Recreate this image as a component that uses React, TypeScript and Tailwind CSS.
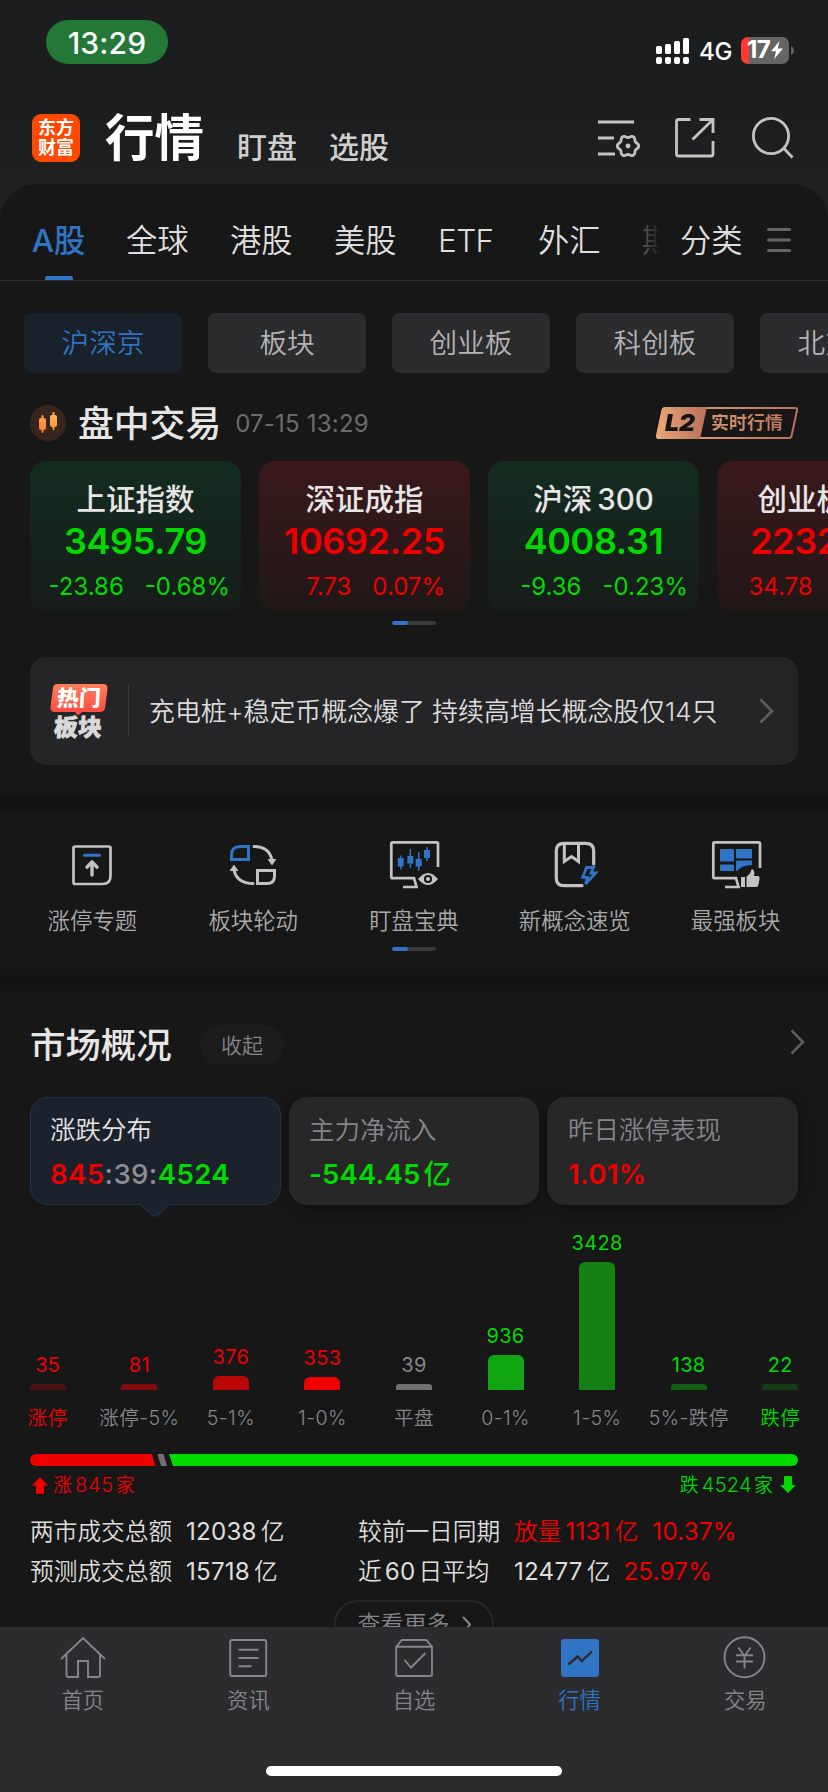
import React from 'react';

const up = 'text-[#ee0000]';
const down = 'text-[#00da00]';

function Chevron({ className }: { className?: string }) {
  return (
    <svg width="15" height="26" viewBox="0 0 15 26" fill="none" stroke="#5f5f61" strokeWidth="2.6" className={className}>
      <path d="M1.5 1.5L13 13L1.5 24.5" />
    </svg>
  );
}

function Pager() {
  return (
    <div className="mx-auto h-1 w-11 overflow-hidden rounded-full bg-[#3a3a3c]">
      <div className="h-1 w-4 rounded-full bg-[#2f74c5]" />
    </div>
  );
}

function StatusBar() {
  const bars = [8, 10, 13, 16];
  return (
    <div className="flex h-[88px] shrink-0 items-start justify-between pr-[34px] pl-[46px]">
      <div className="mt-5 flex h-11 w-[122px] items-center justify-center rounded-full bg-[#237737] pt-px text-[30px] font-medium tracking-[0.2px] text-white">
        13:29
      </div>
      <div className="mt-9 flex h-7 items-center">
        <svg width="33" height="27" viewBox="0 0 33 27" fill="#fff">
          {bars.map((h, i) => (
            <g key={h}>
              <rect x={i * 9} y={17 - h} width="6" height={h} rx="1.6" />
              <rect x={i * 9} y="20" width="6" height="7" rx="2" />
            </g>
          ))}
        </svg>
        <span className="mt-[3px] ml-[10px] w-8 text-[24px] font-medium tracking-[-0.2px] text-white">4G</span>
        <div className="ml-[10px] flex h-[27px] w-12 items-center overflow-hidden rounded-[7px] bg-[linear-gradient(90deg,#ff3b30_0_8px,#656565_8px)] pl-[6px] text-white">
          <span className="text-[24px] font-bold tracking-[-0.6px]">17</span>
          <svg width="12" height="18" viewBox="0 0 12 18" fill="#fff" className="ml-px">
            <path d="M8.5 0L0 10.2H5L3.2 18L12 7.4H6.8Z" />
          </svg>
        </div>
        <svg width="3" height="9" viewBox="0 0 3 9" fill="#656565" className="ml-[2px]">
          <path d="M0 0C4 2 4 7 0 9Z" />
        </svg>
      </div>
    </div>
  );
}

const gearPath =
  Array.from({ length: 73 }, (_, i) => {
    const a = (i / 72) * Math.PI * 2;
    const r = 9.6 + 1.1 * Math.cos(6 * a);
    return `${i ? 'L' : 'M'}${(30 + r * Math.cos(a)).toFixed(2)} ${(29 + r * Math.sin(a)).toFixed(2)}`;
  }).join('') + 'Z';

function Header() {
  return (
    <div className="flex h-24 shrink-0 items-start pl-8">
      <div className="mt-[26px] flex h-12 w-12 flex-col items-center justify-center rounded-[9px] bg-[#ff4800] text-[18px] leading-[20px] font-bold text-white">
        <span>东方</span>
        <span>财富</span>
      </div>
      <div className="mt-[26px] ml-[25px] w-[98px] text-[49.5px] leading-[48px] font-bold whitespace-nowrap text-white">行情</div>
      <div className="mt-11 ml-[34px] text-[30px] leading-[30px] font-medium text-[#cfcfcf]">盯盘</div>
      <div className="mt-11 ml-8 text-[30px] leading-[30px] font-medium text-[#cfcfcf]">选股</div>
      <div className="mt-[29px] ml-[209px] flex text-[#c4c4c4]">
        <svg width="43" height="42" viewBox="0 0 43 42" fill="none" stroke="currentColor" strokeWidth="3">
          <path d="M0 5H36M0 21H16M0 37H17" />
          <path d={gearPath} strokeWidth="2.8" />
          <circle cx="30" cy="29" r="2.4" fill="currentColor" stroke="none" />
        </svg>
        <svg width="41" height="42" viewBox="0 0 41 42" fill="none" stroke="currentColor" strokeWidth="2.8" className="ml-[33px]">
          <path d="M16.5 2.5H4.5Q2.5 2.5 2.5 4.5V37Q2.5 39 4.5 39H37Q39 39 39 37V24M25.5 2.5H39V16M39 2.5L18.500 22.500" />
        </svg>
        <svg width="43" height="42" viewBox="0 0 43 42" fill="none" stroke="currentColor" strokeWidth="2.8" className="ml-[37px]">
          <circle cx="19" cy="19" r="17.6" />
          <path d="M31.5 31L40.5 40.5" />
        </svg>
      </div>
    </div>
  );
}

function Tabs() {
  return (
    <div className="flex h-[97px] border-b border-[#2d2d2d] pl-8 text-[31.3px] text-[#dedede]">
      <div className="flex h-full w-[53px] flex-col items-center">
        <span className="mt-[34px] leading-[46px] font-medium whitespace-nowrap text-[#2f74c5]">A股</span>
        <span className="mt-auto h-1 w-7 rounded-t-[2px] bg-[#2f74c5]" />
      </div>
      <div className="mt-[34px] flex leading-[46px] whitespace-nowrap">
        <span className="ml-[41px] w-[63px]">全球</span>
        <span className="ml-[41px] w-[63px]">港股</span>
        <span className="ml-[41px] w-[63px]">美股</span>
        <span className="ml-[41px] w-[59px] text-[31.5px] tracking-[-0.6px]">ETF</span>
        <span className="ml-[41px] w-[63px]">外汇</span>
        <span className="ml-[42px] w-[17px] overflow-hidden bg-[linear-gradient(90deg,#5a5a5a,#1c1c1c)] bg-clip-text text-transparent">
          <span className="-ml-px block w-8">期</span>
        </span>
        <span className="ml-[20px] w-[63px]">分类</span>
        <svg width="24" height="24" viewBox="0 0 24 24" stroke="#666" strokeWidth="3" strokeLinecap="round" className="mt-[10px] ml-[24px]">
          <path d="M1.5 1.5H22.5M1.5 12H22.5M1.5 22.5H22.5" />
        </svg>
      </div>
    </div>
  );
}

function Chips() {
  return (
    <div className="mt-8 flex h-[60px] gap-[26px] overflow-hidden pl-6 text-[27.6px]">
      <div className="flex w-[158px] shrink-0 items-center justify-center rounded-lg bg-[#19212a] pt-0.5 text-[#2f74c5]">沪深京</div>
      {['板块', '创业板', '科创板', '北交所'].map((t) => (
        <div key={t} className="flex w-[158px] shrink-0 items-center justify-center rounded-lg bg-[#2c2c2e] pt-0.5 text-[#b3b3b5]">
          {t}
        </div>
      ))}
    </div>
  );
}

function SessionTitle() {
  return (
    <div className="mt-8 mb-5 flex h-9 items-center pl-[30px]">
      <svg width="36" height="36" viewBox="0 0 36 36">
        <defs>
          <linearGradient id="c1" x1="0" y1="0" x2="0" y2="1">
            <stop offset="0" stopColor="#ffa04e" />
            <stop offset="1" stopColor="#fd7a3c" />
          </linearGradient>
          <linearGradient id="c2" x1="0" y1="0" x2="0" y2="1">
            <stop offset="0" stopColor="#ffb85c" />
            <stop offset="1" stopColor="#fd9542" />
          </linearGradient>
        </defs>
        <circle cx="18" cy="18" r="18" fill="#38251b" />
        <g fill="url(#c1)">
          <rect x="9" y="13" width="7" height="12" rx="2" />
          <rect x="11.5" y="10" width="2" height="18" rx="1" />
        </g>
        <g fill="url(#c2)">
          <rect x="20" y="10" width="7" height="12" rx="2" />
          <rect x="22.5" y="7" width="2" height="18" rx="1" />
        </g>
      </svg>
      <span className="mt-[3px] ml-[12px] text-[35.800px] font-medium text-[#e6e6e6]">盘中交易</span>
      <span className="mt-[2px] ml-[14px] text-[24px] font-normal tracking-[0.200px] text-[#6b6b6d]">07-15 13:29</span>
      <div className="relative mr-[30px] ml-auto flex h-8 w-[142px] items-center">
        <svg width="142" height="32" viewBox="0 0 142 32" className="absolute inset-0">
          <defs>
            <linearGradient id="l2" x1="0" y1="0" x2="1" y2="0">
              <stop offset="0" stopColor="#e9a778" />
              <stop offset="1" stopColor="#b9705a" />
            </linearGradient>
          </defs>
          <path d="M9.500 1H139Q141.500 1 141 3.500L135.500 29Q135 31 133 31H3Q0.500 31 1 28.500L6.500 3Q7 1 9.500 1Z" fill="none" stroke="url(#l2)" strokeWidth="2" />
          <path d="M9.500 0H51L44 32H3Q0 32 0.500 29L6 3Q6.500 0 9.500 0Z" fill="url(#l2)" />
        </svg>
        <span className="relative ml-[9px] inline-block w-[36px] origin-left scale-x-[1.08] text-[23px] font-black italic text-[#141414]">L2</span>
        <span className="relative ml-[10px] bg-[linear-gradient(90deg,#d8966f,#bd755d)] bg-clip-text text-[18px] font-bold whitespace-nowrap text-transparent">
          实时行情
        </span>
      </div>
    </div>
  );
}

type Index = { name: React.ReactNode; value: string; diff: string; pct: string; rise: boolean; pad: string };
const indices: Index[] = [
  { name: '上证指数', value: '3495.79', diff: '-23.86', pct: '-0.68%', rise: false, pad: 'pr-[11px]' },
  { name: '深证成指', value: '10692.25', diff: '7.73', pct: '0.07%', rise: true, pad: 'pr-[25px]' },
  { name: <>沪深<span className="ml-[5px]">300</span></>, value: '4008.31', diff: '-9.36', pct: '-0.23%', rise: false, pad: 'pr-[11px]' },
  { name: <span className="mr-[12px]">创业板指</span>, value: '2232.60', diff: '34.78', pct: '1.58%', rise: true, pad: 'pr-[25px]' },
];

function IndexCards() {
  return (
    <div className="flex h-[151px] gap-[18px] overflow-hidden pl-[30px]">
      {indices.map((x) => (
        <div
          key={x.value}
          className={`flex w-[211px] shrink-0 flex-col items-center rounded-2xl pt-[18px] ${
            x.rise ? 'bg-[linear-gradient(180deg,#3b191b,#201717)]' : 'bg-[linear-gradient(180deg,#142c20,#171c1a)]'
          }`}
        >
          <span className="text-[29.500px] leading-[40px] font-medium text-[#e6e6e6]">{x.name}</span>
          <span className={`mt-[1px] text-[36px] leading-[42px] font-semibold tracking-[-0.400px] ${x.rise ? up : down}`}>{x.value}</span>
          <div className={`mt-[10px] flex w-full justify-end gap-[21px] text-[24px] leading-[29px] font-normal ${x.pad} ${x.rise ? up : down}`}>
            <span>{x.diff}</span>
            <span>{x.pct}</span>
          </div>
        </div>
      ))}
    </div>
  );
}

function HotBanner() {
  return (
    <div className="mx-[30px] mt-8 mb-[30px] flex h-[108px] items-center rounded-2xl bg-[#252527]">
      <div className="relative ml-5 h-[54px] w-[58px]">
        <svg width="58" height="32" viewBox="0 0 58 32" className="absolute top-0 left-0">
          <defs>
            <linearGradient id="hot" x1="0" y1="0" x2="0" y2="1">
              <stop offset="0" stopColor="#ff7f5c" />
              <stop offset="1" stopColor="#fb4840" />
            </linearGradient>
          </defs>
          <path d="M7 0H53Q58 0 57.500 5L55 24Q54.500 28 50 28H32L28 31.500L25 28H5Q0 28 0.500 23L3 4Q3.500 0 7 0Z" fill="url(#hot)" />
        </svg>
        <div className="relative -skew-x-3 text-center text-[22px] leading-[29px] font-black text-white">热门</div>
        <div className="relative -ml-[2px] -skew-x-3 text-center text-[24px] leading-[29px] font-black text-[#d9d9d9] [-webkit-text-stroke:0.600px_#d9d9d9]">板块</div>
      </div>
      <div className="ml-5 h-[52px] w-px bg-[#3c3c3e]" />
      <span className="mt-0.5 ml-[20px] text-[25.900px] whitespace-pre text-[#dcdcde]">充电桩+稳定币概念爆了 持续高增长概念股仅14只</span>
      <Chevron className="mr-[24px] ml-auto" />
    </div>
  );
}

const tools = [
  {
    label: '涨停专题',
    icon: (
      <>
        <path d="M11 10.500H45Q46.500 10.500 46.500 12V40Q46.500 48 38.500 48H11Q9.500 48 9.500 46.500V12Q9.500 10.500 11 10.500Z" stroke="#c3c3c3" />
        <path d="M20.500 19.300H35.500" stroke="#2f74c5" strokeWidth="3" strokeLinecap="round" />
        <path d="M28 39V26M23 31.200L28 25.800L33 31.200" stroke="#c3c3c3" strokeWidth="3.400" strokeLinecap="round" strokeLinejoin="round" />
      </>
    ),
  },
  {
    label: '板块轮动',
    icon: (
      <>
        <path d="M15 10.500H23.500V23.500H6.500V19Q6.500 10.500 15 10.500Z" stroke="#2f74c5" strokeWidth="3" />
        <path d="M32.500 34.500H49.500V40Q49.500 47.500 42 47.500H32.500Z" stroke="#c3c3c3" strokeWidth="3" />
        <path d="M29 10.500Q44 10.500 47 24M28 47.500Q12 47.500 9 34" stroke="#c3c3c3" strokeWidth="3" strokeLinecap="round" />
        <path d="M43.500 23.500H50.500L47 28.500ZM5.500 34.500H12.500L9 29.500Z" fill="#c3c3c3" stroke="#c3c3c3" strokeWidth="1.200" strokeLinejoin="round" />
      </>
    ),
  },
  {
    label: '盯盘宝典',
    icon: (
      <>
        <path d="M52 31V7.500Q52 6.300 50.500 6.300H6.800Q5.300 6.300 5.300 7.800V40.700Q5.300 42.200 6.800 42.200H28L30.500 51H17" stroke="#c3c3c3" />
        <g fill="#2f74c5">
          <rect x="11.700" y="22" width="6" height="8.500" />
          <rect x="14" y="19.500" width="1.500" height="14" />
          <rect x="21.300" y="20" width="6" height="7.500" />
          <rect x="23.600" y="13" width="1.500" height="19" />
          <rect x="29.700" y="23" width="6" height="7.500" />
          <rect x="32" y="16" width="1.500" height="19" />
          <rect x="38" y="14" width="6" height="8" />
          <rect x="40.300" y="11" width="1.500" height="14" />
        </g>
        <path d="M29.500 43Q42 28 54.500 43Q42 58 29.500 43Z" fill="#171717" />
        <path d="M32 43Q42 31 52 43Q42 55 32 43Z" fill="#c3c3c3" />
        <circle cx="42" cy="43" r="3.100" stroke="#171717" strokeWidth="2" />
      </>
    ),
  },
  {
    label: '新概念速览',
    icon: (
      <>
        <path d="M46.700 28V15Q46.700 7.300 39 7.300H17Q9.300 7.300 9.300 15V42Q9.300 49.700 17 49.700H35" stroke="#c3c3c3" strokeWidth="3.200" strokeLinecap="round" />
        <path d="M17.300 7V25.500L24.500 20.500L31.500 25.500V7" stroke="#c3c3c3" strokeWidth="3" />
        <path d="M39.500 31.500H46.500L44 37H48.800L38.500 48L40.500 41.300H35.700Z" stroke="#2f74c5" strokeWidth="2.800" />
      </>
    ),
  },
  {
    label: '最强板块',
    icon: (
      <>
        <path d="M52 32V7.500Q52 6.300 50.500 6.300H6.800Q5.300 6.300 5.300 7.800V40.700Q5.300 42.200 6.800 42.200H28L30.500 51H17" stroke="#c3c3c3" />
        <g fill="#2f74c5">
          <rect x="12" y="13" width="14" height="12.500" rx="1" />
          <rect x="28" y="13" width="16" height="9.500" rx="1" />
          <rect x="12" y="28.500" width="14" height="6.500" rx="1" />
          <path d="M29 24.500H44V29Q34 29 29 35H28V25.500Q28 24.500 29 24.500Z" />
        </g>
        <circle cx="43" cy="42.500" r="12.500" fill="#171717" />
        <path d="M33 41H37V51H33ZM38.500 40.500Q43 37.500 43 34.500Q44 32.500 45.500 34Q47 36 45.800 40H49.500Q52 40 51.500 43L50.500 48.500Q50 51 48 51H38.500Z" fill="#c3c3c3" />
      </>
    ),
  },
];

function Tools() {
  return (
    <div className="h-[164px] px-[12px] pt-[25px]">
      <div className="grid grid-cols-5">
        {tools.map((t) => (
          <div key={t.label} className="flex flex-col items-center">
            <svg width="56" height="56" viewBox="0 0 56 56" fill="none" strokeWidth="2.700">
              {t.icon}
            </svg>
            <span className="mt-[12px] text-[22.400px] leading-[33px] text-[#a9a9ab]">{t.label}</span>
          </div>
        ))}
      </div>
      <div className="mt-[10px]">
        <Pager />
      </div>
    </div>
  );
}

function OverviewCards() {
  return (
    <div className="mx-[30px] mt-8 grid h-[108px] grid-cols-[251px_250px_251px] gap-2">
      <div className="relative flex flex-col rounded-[18px] border border-[#20364f] bg-[#1b222b] pt-[16px] pl-[19px]">
        <span className="text-[25.500px] leading-[32px] text-[#e3e3e3]">涨跌分布</span>
        <span className="mt-[12px] text-[27.600px] leading-[32px] font-semibold tracking-[0.400px]">
          <span className={up}>845</span>
          <span className="font-medium text-[#8e8e96]">:39:</span>
          <span className={down}>4524</span>
        </span>
        <svg width="30" height="14" viewBox="0 0 30 14" className="absolute top-[106px] left-[109px]">
          <path d="M0 0.500L12.500 11.500Q15 13 17.500 11.500L30 0.500V0H0Z" fill="#1b222b" />
          <path d="M0 0.500L12.500 11.500Q15 13 17.500 11.500L30 0.500" fill="none" stroke="#20364f" />
        </svg>
      </div>
      <div className="flex flex-col rounded-[18px] bg-[#272727] pt-[17px] pl-5 shadow-[0_2px_12px_rgba(0,0,0,0.35)]">
        <span className="text-[25.500px] leading-[32px] text-[#85858b]">主力净流入</span>
        <span className={`mt-[12px] text-[27.500px] leading-[32px] font-semibold tracking-[0.200px] ${down}`}>
          -544.45<span className="ml-[3px] font-medium">亿</span>
        </span>
      </div>
      <div className="flex flex-col rounded-[18px] bg-[#272727] pt-[17px] pl-[21px] shadow-[0_2px_12px_rgba(0,0,0,0.35)]">
        <span className="text-[25.500px] leading-[32px] text-[#85858b]">昨日涨停表现</span>
        <span className={`mt-[12px] text-[27.500px] leading-[32px] font-semibold tracking-[0.300px] ${up}`}>1.01%</span>
      </div>
    </div>
  );
}

const bars = [
  { n: 35, h: 6, label: '涨停', bar: 'bg-[#4b1212]', num: up, cat: up },
  { n: 81, h: 6, label: '涨停-5%', bar: 'bg-[#820b0b]', num: up, cat: 'text-[#85858b]' },
  { n: 376, h: 14, label: '5-1%', bar: 'bg-[#b90606]', num: up, cat: 'text-[#85858b]' },
  { n: 353, h: 13, label: '1-0%', bar: 'bg-[#ee0000]', num: up, cat: 'text-[#85858b]' },
  { n: 39, h: 6, label: '平盘', bar: 'bg-[#717171]', num: 'text-[#85858b]', cat: 'text-[#85858b]' },
  { n: 936, h: 35, label: '0-1%', bar: 'bg-[#12a512]', num: down, cat: 'text-[#85858b]' },
  { n: 3428, h: 128, label: '1-5%', bar: 'bg-[#158115]', num: down, cat: 'text-[#85858b]' },
  { n: 138, h: 6, label: '5%-跌停', bar: 'bg-[#155c15]', num: down, cat: 'text-[#85858b]' },
  { n: 22, h: 6, label: '跌停', bar: 'bg-[#163a16]', num: down, cat: down },
];

function Distribution() {
  return (
    <>
      <div className="grid grid-cols-9 px-[2px]">
        {bars.map((b) => (
          <div key={b.n} className="flex flex-col items-center">
            <div className="flex h-[185px] flex-col items-center justify-end">
              <span className={`mb-[7px] text-[20px] leading-[24px] font-normal tracking-[0.300px] ${b.num}`}>{b.n}</span>
              <div className={`w-9 ${b.h > 6 ? 'rounded-t-[6px]' : 'rounded-t-[3px]'} ${b.bar}`} style={{ height: b.h }} />
            </div>
            <span className={`flex h-14 items-center pt-[2px] text-[19.600px] tracking-[0.400px] whitespace-nowrap ${b.cat}`}>{b.label}</span>
          </div>
        ))}
      </div>
      <svg width="768" height="12" viewBox="0 0 768 12" className="mx-[30px] mt-2">
        <path d="M6 0H122L125.500 12H6A6 6 0 0 1 6 0Z" fill="#ee0000" />
        <path d="M127.500 0H133.500L137 12H131Z" fill="#717171" />
        <path d="M139 0H762A6 6 0 0 1 762 12H143Z" fill="#00da00" />
      </svg>
      <div className="mx-[32px] flex h-9 items-center text-[19px]">
        <svg width="16" height="17" viewBox="0 0 16 17" className="mt-[2px]">
          <path d="M8 0L16 8.500H12V16Q12 17 11 17H5Q4 17 4 16V8.500H0Z" fill="#ee0000" />
        </svg>
        <span className={`mt-[2px] ml-[5px] ${up}`}>
          涨<span className="mr-[2px] ml-[3px] text-[20px] tracking-[0.700px]">845</span>家
        </span>
        <span className={`mt-[2px] ml-auto ${down}`}>
          跌<span className="mr-[2px] ml-[3px] text-[20px] tracking-[0.300px]">4524</span>家
        </span>
        <svg width="16" height="17" viewBox="0 0 16 17" className="ml-[7px]">
          <path d="M8 17L0 9H4V1Q4 0 5 0H11Q12 0 12 1V9H16Z" fill="#00da00" />
        </svg>
      </div>
    </>
  );
}

function Num({ children, className = '' }: { children: React.ReactNode; className?: string }) {
  return <span className={`text-[24.200px] font-normal tracking-[0.200px] ${className}`}>{children}</span>;
}

function Turnover() {
  const row = 'flex h-10 items-center whitespace-nowrap';
  return (
    <div className="mt-[10px] grid grid-cols-[328px_1fr] pl-[30px] text-[23.700px] text-[#dedede]">
      <div className={row}>
        <span className="w-[156px]">两市成交总额</span>
        <span><Num className="mr-1">12038</Num>亿</span>
      </div>
      <div className={row}>
        <span className="w-[156px]">较前一日同期</span>
        <span className={up}>放量<Num className="mx-1">1131</Num>亿</span>
        <Num className={`ml-[14px] ${up}`}>10.37%</Num>
      </div>
      <div className={row}>
        <span className="w-[156px]">预测成交总额</span>
        <span><Num className="mr-1">15718</Num>亿</span>
      </div>
      <div className={row}>
        <span className="w-[156px]">近<Num className="mx-[3px]">60</Num>日平均</span>
        <span><Num className="mr-1">12477</Num>亿</span>
        <Num className={`ml-[13px] ${up}`}>25.97%</Num>
      </div>
    </div>
  );
}

const nav = [
  { label: '首页', icon: <path d="M6 32L28 11L50 32M11.500 27.500V48Q11.500 50 13.500 50H23V34H33V50H43Q45 50 45 48V27.500" /> },
  {
    label: '资讯',
    icon: (
      <>
        <rect x="10.200" y="13" width="36" height="36" rx="2" />
        <path d="M18.500 22.700H38.500M18.500 31H38.500M18.500 39.300H31.500" />
      </>
    ),
  },
  {
    label: '自选',
    icon: (
      <path d="M10.200 19.800H46V47Q46 49 44 49H12.200Q10.200 49 10.200 47V19.800L15 13.800Q15.700 13 16.500 13H39.700Q40.500 13 41.200 13.800L46 19.800M18.500 33L25 40.500L39.500 26" />
    ),
  },
  {
    label: '行情',
    active: true,
    icon: (
      <>
        <rect x="9.500" y="12.500" width="37" height="37" rx="2" fill="#2f74c5" stroke="#2f74c5" strokeWidth="1" />
        <path d="M16.500 37.500L25.500 29.500L29.800 34L39.800 24.500" stroke="#2c2c2e" strokeWidth="2.400" />
      </>
    ),
  },
  {
    label: '交易',
    icon: (
      <>
        <circle cx="27.500" cy="30.300" r="20" />
        <path d="M21.300 20.500L27.500 29L33.700 20.500M27.500 28V41.500M19 28.300H36M19 34.500H36" />
      </>
    ),
  },
];

function BottomNav() {
  return (
    <div className="flex h-[165px] shrink-0 flex-col bg-[#2c2c2e]">
      <div className="grid grid-cols-5">
        {nav.map((n) => (
          <div key={n.label} className="flex flex-col items-center">
            <svg width="56" height="56" viewBox="0 0 56 56" fill="none" stroke="#85858b" strokeWidth="1.900">
              {n.icon}
            </svg>
            <span className={`mt-[2px] text-[21.300px] leading-[31px] ${n.active ? 'text-[#2f74c5]' : 'text-[#85858b]'}`}>{n.label}</span>
          </div>
        ))}
      </div>
      <div className="mx-auto mt-auto mb-4 h-[10px] w-[296px] rounded-full bg-white" />
    </div>
  );
}

export default function App() {
  return (
    <div className="flex h-[1792px] w-[828px] flex-col overflow-hidden bg-[linear-gradient(180deg,#1c1d1f_0px,#1c1d1f_110px,#212121_200px)] font-['Inter','Noto_Sans_CJK_SC',sans-serif] leading-none font-[350]">
      <StatusBar />
      <Header />
      <div className="min-h-0 flex-1 overflow-hidden rounded-t-[36px] bg-[#171717]">
        <Tabs />
        <Chips />
        <SessionTitle />
        <IndexCards />
        <div className="mt-[9px]">
          <Pager />
        </div>
        <HotBanner />
        <div className="h-4 bg-[#121212]" />
        <Tools />
        <div className="h-4 bg-[#121212]" />
        <div className="mt-[34px] flex h-10 items-center pl-[30px]">
          <span className="mt-[2px] w-[142px] text-[35.400px] font-medium text-[#e6e6e6]">市场概况</span>
          <span className="ml-[28px] flex h-10 w-[84px] items-center justify-center rounded-full bg-[#1c1c1c] text-[21px] text-[#85858b]">收起</span>
          <Chevron className="mr-[23px] mb-[6px] ml-auto" />
        </div>
        <OverviewCards />
        <Distribution />
        <Turnover />
        <div className="mx-auto mt-2 flex h-12 w-[160px] items-center justify-center rounded-full border-2 border-[#272727] text-[23px] text-[#85858b]">
          查看更多
          <svg width="9" height="17" viewBox="0 0 9 17" fill="none" stroke="#85858b" strokeWidth="2" className="ml-[12px]">
            <path d="M1 1L8 8.500L1 16" />
          </svg>
        </div>
      </div>
      <BottomNav />
    </div>
  );
}
